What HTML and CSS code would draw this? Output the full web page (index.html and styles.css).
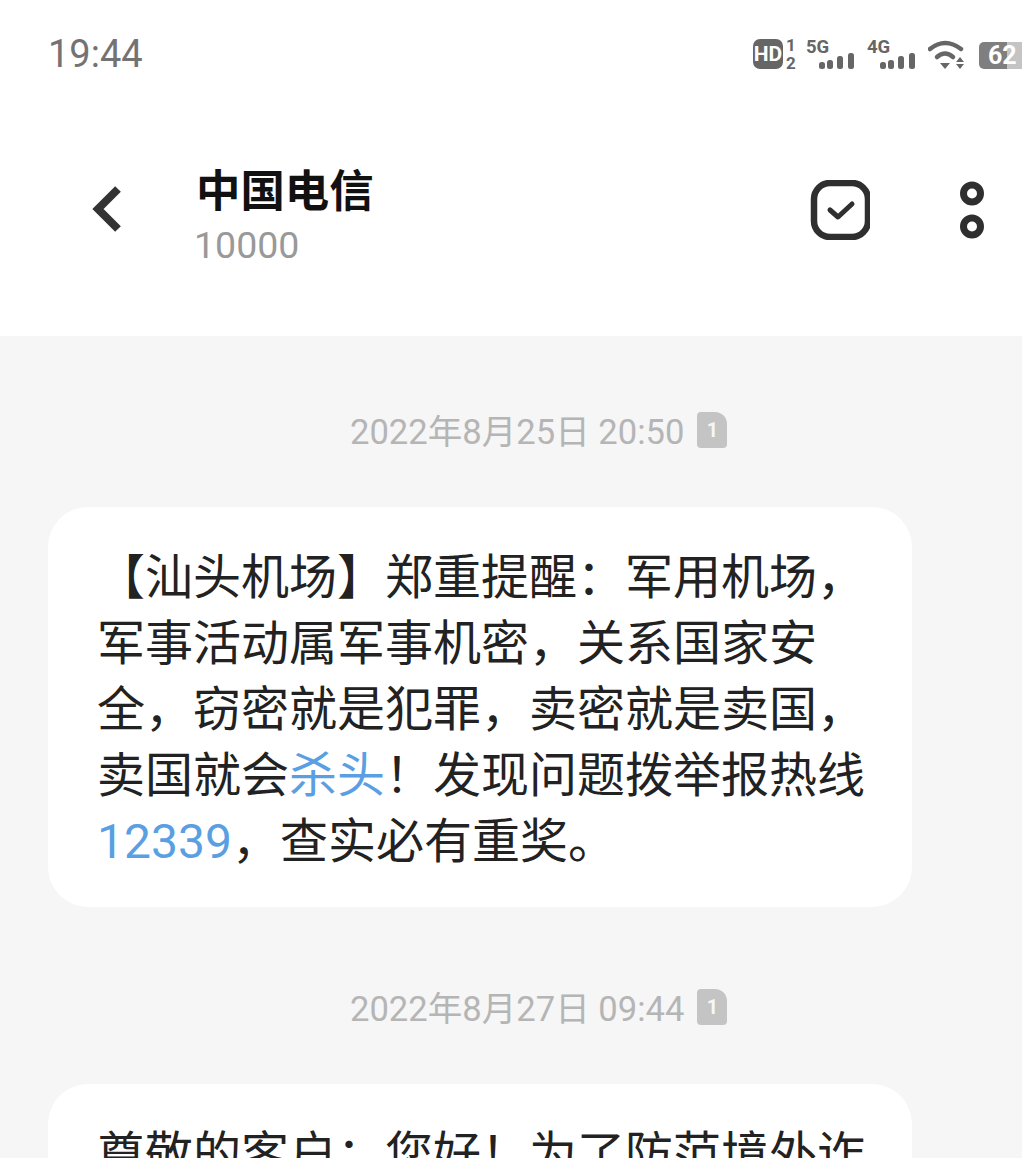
FILE: index.html
```html
<!DOCTYPE html>
<html lang="zh-CN">
<head>
    <meta charset="UTF-8">
    <meta name="viewport" content="width=device-width, initial-scale=1.0">
    <title>中国电信</title>
    <link rel="stylesheet" href="styles.css">
</head>
<body>

    <div class="phone">
        <div class="status-bar">
            <span class="clock">19:44</span>
            <div class="status-icons">
                <svg class="hd-icon" width="46" height="36" viewBox="0 0 46 36">
                    <rect x="0" y="2" width="30" height="30" rx="7" fill="#666"/>
                    <text x="15" y="24" class="hd-text">HD</text>
                    <text x="38" y="14" class="sim-text">1</text>
                    <text x="38" y="32" class="sim-text">2</text>
                </svg>
                <svg width="50" height="34" viewBox="0 0 50 34">
                    <text x="0" y="16" class="net-text">5G</text>
                    <rect x="13" y="25" width="6" height="7" rx="2.5" fill="#666"/>
                    <rect x="21" y="23" width="6" height="9" rx="2.5" fill="#666"/>
                    <rect x="31" y="19" width="6" height="13" rx="2.5" fill="#666"/>
                    <rect x="42" y="16" width="6" height="16" rx="2.5" fill="#666"/>
                </svg>
                <svg width="50" height="34" viewBox="0 0 50 34">
                    <text x="0" y="16" class="net-text">4G</text>
                    <rect x="13" y="25" width="6" height="7" rx="2.5" fill="#666"/>
                    <rect x="21" y="23" width="6" height="9" rx="2.5" fill="#666"/>
                    <rect x="31" y="19" width="6" height="13" rx="2.5" fill="#666"/>
                    <rect x="42" y="16" width="6" height="16" rx="2.5" fill="#666"/>
                </svg>
                <svg width="40" height="34" viewBox="0 0 40 34">
                    <path d="M2 12 Q17 0 33 12" fill="none" stroke="#666" stroke-width="4.5" stroke-linecap="round"/>
                    <path d="M9 20 Q17 13 25 20" fill="none" stroke="#666" stroke-width="4.5" stroke-linecap="round"/>
                    <path d="M12 26 L22 26 L17 32 Z" fill="#666"/>
                    <path d="M32 20 L36 25 L28 25 Z" fill="#666"/>
                    <path d="M28 27 L36 27 L32 32 Z" fill="#666"/>
                </svg>
                <div class="battery">62</div>
            </div>
        </div>

        <div class="title-bar">
            <svg class="back-icon" width="34" height="48" viewBox="0 0 34 48">
                <path d="M29 4 L9 24 L29 44" fill="none" stroke="#333" stroke-width="8"/>
            </svg>
            <div class="contact">
                <div class="contact-name">中国电信</div>
                <div class="contact-number">10000</div>
            </div>
            <svg class="check-icon" width="60" height="60" viewBox="0 0 60 60">
                <rect x="4" y="3" width="54" height="54" rx="16" fill="none" stroke="#2f2f2f" stroke-width="6.5"/>
                <path d="M20 30 L28 37 L42 24" fill="none" stroke="#2f2f2f" stroke-width="5" stroke-linecap="round" stroke-linejoin="round"/>
            </svg>
            <svg class="more-icon" width="26" height="60" viewBox="0 0 26 60">
                <circle cx="13" cy="13.5" r="8.5" fill="none" stroke="#2f2f2f" stroke-width="7"/>
                <circle cx="13" cy="46.5" r="8.5" fill="none" stroke="#2f2f2f" stroke-width="7"/>
            </svg>
        </div>

        <div class="messages">
            <div class="msg-time">
                <span>2022年8月25日 20:50</span>
                <span class="sim-badge">1</span>
            </div>
            <div class="bubble">
                <div class="line">【汕头机场】郑重提醒：军用机场，</div>
                <div class="line">军事活动属军事机密，关系国家安</div>
                <div class="line">全，窃密就是犯罪，卖密就是卖国，</div>
                <div class="line">卖国就会<span class="link">杀头</span>！发现问题拨举报热线</div>
                <div class="line"><span class="link">12339</span>，查实必有重奖。</div>
            </div>

            <div class="msg-time">
                <span>2022年8月27日 09:44</span>
                <span class="sim-badge">1</span>
            </div>
            <div class="bubble">
                <div class="line">尊敬的客户：您好！为了防范境外诈</div>
            </div>
        </div>
    </div>

</body>
</html>
```

FILE: styles.css
```css
* {
    box-sizing: border-box;
}

html, body {
    margin: 0;
    padding: 0;
    height: 100%;
    overflow: hidden;
}

body {
    background-color: #fff;
    font-family: "Roboto", "Noto Sans CJK SC", sans-serif;
}

.phone {
    height: 1158px;
    overflow: hidden;
    display: flex;
    flex-direction: column;
}

.status-bar {
    flex: none;
    height: 110px;
    padding: 32px 0 0 48px;
    display: flex;
    justify-content: space-between;
    align-items: flex-start;
}

.clock {
    font-size: 38px;
    line-height: 44px;
    color: #737373;
}

.status-icons {
    display: flex;
    align-items: flex-start;
    gap: 11px;
    padding-top: 5px;
}

.hd-icon {
    margin-right: -4px;
}

.hd-text {
    font: bold 21px "Roboto", sans-serif;
    fill: #fff;
    text-anchor: middle;
}

.sim-text {
    font: bold 17px "Roboto", sans-serif;
    fill: #666;
    text-anchor: middle;
}

.net-text {
    font: bold 18.5px "Roboto", sans-serif;
    fill: #666;
}

.battery {
    width: 43px;
    height: 27px;
    margin-top: 5px;
    border-radius: 5px 0 0 5px;
    background: linear-gradient(to right, #7f7f7f 0, #7f7f7f 66%, #c4c4c4 66%, #c4c4c4 100%);
    color: #fff;
    font-size: 25px;
    font-weight: 700;
    line-height: 27px;
    padding-left: 9px;
    white-space: nowrap;
}

.title-bar {
    flex: none;
    height: 226px;
    display: flex;
    align-items: flex-start;
    padding: 56px 0 0 89px;
}

.back-icon {
    margin-top: 19px;
}

.contact {
    margin-left: 73px;
    flex: 1;
}

.contact-name {
    font-size: 44.4px;
    line-height: 52px;
    font-weight: 700;
    color: #111;
}

.contact-number {
    font-size: 37.5px;
    line-height: 54px;
    color: #999;
    margin-left: -2px;
}

.check-icon {
    margin-top: 14px;
}

.more-icon {
    margin: 14px 37px 0 89px;
}

.messages {
    flex: 1;
    background-color: #f6f6f6;
    padding: 0 110px 0 48px;
}

.msg-time {
    height: 171px;
    padding: 75px 0 0 302px;
    display: flex;
    align-items: flex-start;
    gap: 13px;
    font-size: 34.6px;
    line-height: 42px;
    color: #b5b5b5;
    white-space: nowrap;
}

.sim-badge {
    width: 30px;
    height: 36px;
    margin-top: 1px;
    background-color: #c4c4c4;
    border-radius: 4px 12px 4px 4px;
    color: #f6f6f6;
    font-size: 20px;
    font-weight: 700;
    line-height: 36px;
    text-align: center;
}

.bubble {
    background-color: #fff;
    border-radius: 40px;
    padding: 38px 40px 0 49px;
    height: 400px;
    margin-bottom: 6px;
}

.line {
    font-size: 48px;
    line-height: 66px;
    color: #222;
    white-space: nowrap;
}

.link {
    color: #5b9fe3;
}
```
